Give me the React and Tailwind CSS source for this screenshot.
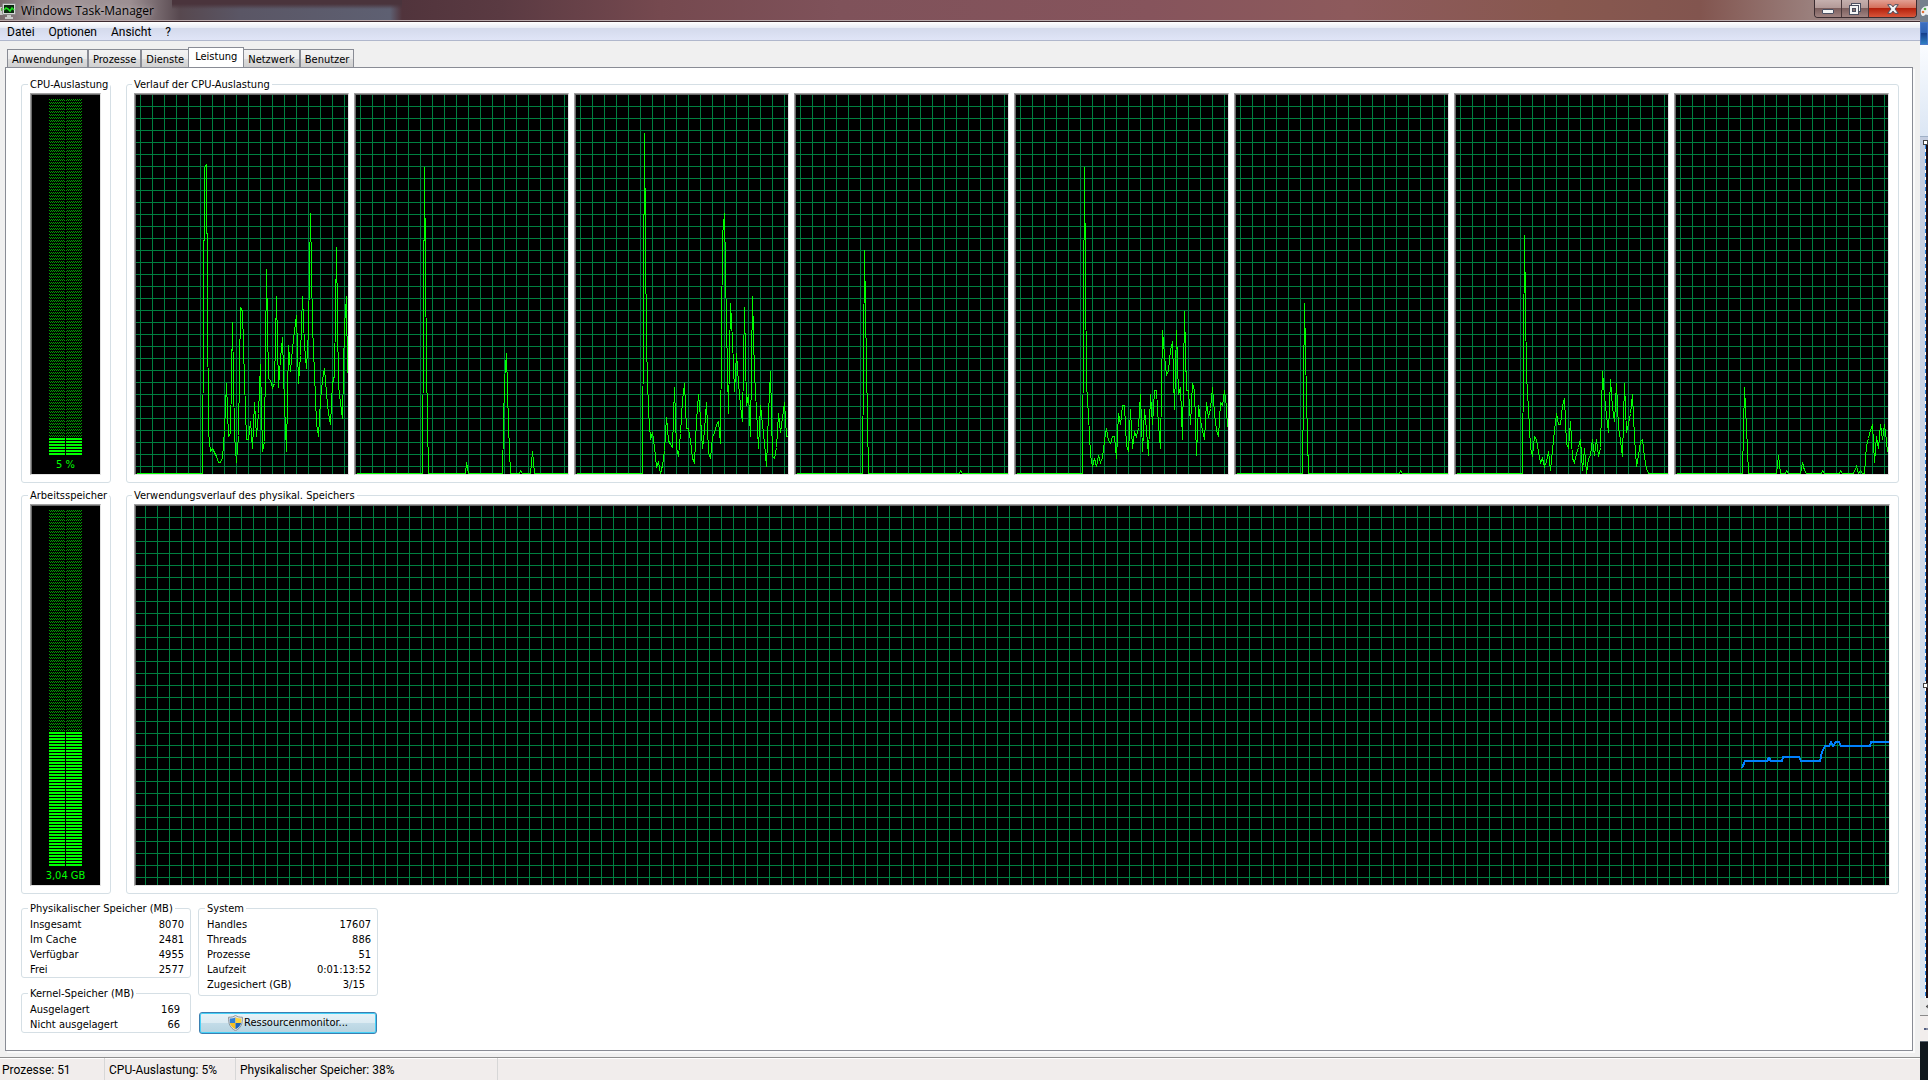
// src/App.jsx
import React, { useState } from 'react';

const menuItems = ['Datei', 'Optionen', 'Ansicht', '?'];
const tabs = ['Anwendungen', 'Prozesse', 'Dienste', 'Leistung', 'Netzwerk', 'Benutzer'];

// One polyline per core, one sample every two pixels
const cpuHistory = [
  '0,378 66,378 68,72 70,69 72,337 74,356 76,353 78,357 80,361 82,367 84,367 86,362 88,335 90,288 92,341 94,338 96,227 98,340 100,367 102,340 104,212 106,216 108,285 110,344 112,344 114,326 116,353 118,307 120,341 122,318 124,269 126,356 128,346 130,174 132,283 134,285 136,292 138,288 140,201 142,292 144,263 146,242 148,310 150,356 152,250 154,276 156,253 158,235 160,220 162,288 164,260 166,201 168,250 170,273 172,235 174,118 176,230 178,278 180,328 182,341 184,305 186,285 188,273 190,298 192,318 194,329 196,288 198,280 200,152 202,290 204,308 206,323 208,230 210,201 211,278',
  '0,378 66,378 68,72 70,270 72,378 109,378 110,367 112,378 146,378 148,285 150,258 152,330 154,378 163,378 164,375 166,378 174,378 176,356 178,378 212,378',
  '0,378 66,378 68,38 70,250 72,315 74,344 76,337 78,352 80,371 82,367 84,378 86,370 88,355 90,322 92,345 94,349 96,352 98,292 100,352 102,361 104,338 106,305 108,288 110,333 112,333 114,345 116,363 118,367 120,325 122,299 124,322 126,353 128,335 130,307 132,357 134,363 136,341 138,338 140,329 142,326 144,348 146,140 148,118 150,230 152,318 154,208 156,245 158,296 160,258 162,288 164,310 166,326 168,212 170,310 172,299 174,341 176,201 178,278 180,315 182,353 184,310 186,329 188,348 190,371 192,318 194,276 196,361 198,363 200,352 202,318 204,337 206,322 208,307 210,341 212,341',
  '0,378 66,378 68,155 70,270 72,378 163,378 164,375 166,378 212,378',
  '0,378 66,378 68,72 70,288 72,320 74,359 76,371 78,363 80,371 82,360 84,367 86,362 88,345 90,333 92,345 94,348 96,341 98,341 100,363 102,318 104,329 106,310 108,310 110,350 112,356 114,314 116,353 118,337 120,341 122,332 124,299 126,356 128,314 130,335 132,360 134,299 136,329 138,295 140,295 142,330 144,353 146,235 148,260 150,280 152,275 154,255 156,246 158,314 160,235 162,299 164,292 166,344 168,216 170,295 172,295 174,329 176,288 178,295 180,360 182,310 184,325 186,335 188,344 190,307 192,322 194,313 196,292 198,318 200,335 202,341 204,307 206,310 208,295 210,312 211,332',
  '0,378 66,378 68,208 70,303 72,378 163,378 164,375 166,378 212,378',
  '0,378 66,378 68,140 70,280 72,314 74,352 76,361 78,341 80,344 82,357 84,367 86,363 88,371 90,366 92,356 94,375 96,355 98,335 100,318 102,329 104,329 106,310 108,303 110,348 112,353 114,326 116,363 118,367 120,358 122,352 124,344 126,375 128,353 130,378 132,363 134,360 136,344 138,360 140,344 142,361 144,352 146,276 148,300 150,320 152,337 154,284 156,312 158,326 160,288 162,332 164,345 166,361 168,288 170,337 172,328 174,318 176,299 178,342 180,371 182,360 184,346 186,344 188,362 190,373 192,378 212,378',
  '0,378 66,378 68,292 70,332 72,378 100,378 102,360 104,378 109,378 110,375 112,378 124,378 126,367 128,375 130,378 145,378 146,375 148,378 163,378 164,375 166,378 177,378 180,371 182,378 184,375 186,378 188,378 190,350 192,343 194,335 196,329 198,367 200,341 202,353 204,329 206,344 208,329 210,345 211,357',
];

const memoryHistory =
  '1606,262 1609,255 1631,255 1633,252 1635,255 1646,255 1647,251 1663,251 1665,255 1684,255 1686,246 1689,240 1693,240 1695,236 1697,240 1700,236 1703,236 1705,240 1734,240 1735,236 1754,236';

const physicalMemory = [
  ['Insgesamt', '8070'],
  ['Im Cache', '2481'],
  ['Verfügbar', '4955'],
  ['Frei', '2577'],
];

const kernelMemory = [
  ['Ausgelagert', '169'],
  ['Nicht ausgelagert', '66'],
];

const systemStats = [
  ['Handles', '17607'],
  ['Threads', '886'],
  ['Prozesse', '51'],
  ['Laufzeit', '0:01:13:52'],
  ['Zugesichert (GB)', '3/15'],
];

const SEGMENTS = 119;

const Group = ({ title, className = '', children }) => (
  <fieldset className={`flex min-w-0 flex-col rounded-[3px] border border-[#d5dfe5] ${className}`}>
    <legend className="-ml-0.5 h-3.5 whitespace-nowrap px-0.5 leading-4">{title}</legend>
    {children}
  </fieldset>
);

const Sunken = ({ className = '', children }) => (
  <div className={`flex min-w-0 flex-col border border-t-[#a0a0a0] border-l-[#a0a0a0] border-r-[#e3e3e3] border-b-[#e3e3e3] ${className}`}>
    <div className="flex min-h-0 flex-1 flex-col border-t border-l border-[#696969] bg-black">
      {children}
    </div>
  </div>
);

const Graph = ({ id, label, points, width, gridX, color = '#00ff00', stroke = 1 }) => (
  <svg className="min-h-0 w-full flex-1" role="img" aria-label={label}>
    <defs>
      <pattern id={id} x={gridX} y="11" width="12" height="12" patternUnits="userSpaceOnUse">
        <rect width="12" height="1" fill="#008040" />
        <rect width="1" height="12" fill="#008040" />
      </pattern>
    </defs>
    <rect width="100%" height="100%" fill={`url(#${id})`} />
    <svg width="100%" height="100%" viewBox={`0 0 ${width} 379`} preserveAspectRatio="none">
      <polyline
        points={points}
        transform={stroke === 1 ? 'translate(0.5 0.5)' : undefined}
        fill="none"
        stroke={color}
        strokeWidth={stroke}
        vectorEffect="non-scaling-stroke"
        shapeRendering="crispEdges"
      />
    </svg>
  </svg>
);

const Meter = ({ id, label, percent, value }) => {
  const lit = Math.round((SEGMENTS * percent) / 100);
  const top = (SEGMENTS - lit) * 3;
  return (
    <Sunken className="flex-1">
      <div className="flex min-h-0 flex-1 flex-col items-center pt-1 pr-px pb-[3px]">
        <svg
          className="min-h-0 w-[33px] flex-1"
          viewBox="0 0 33 357"
          preserveAspectRatio="none"
          shapeRendering="crispEdges"
          role="img"
          aria-label={label}
        >
          <defs>
            <pattern id={id} width="2" height="3" patternUnits="userSpaceOnUse">
              <rect width="1" height="1" fill="#00a000" />
              <rect x="1" y="1" width="1" height="1" fill="#00a000" />
            </pattern>
            <pattern id={`${id}-lit`} width="2" height="3" patternUnits="userSpaceOnUse">
              <rect width="2" height="2" fill="#00ff00" />
            </pattern>
          </defs>
          {[0, 17].map((x) => (
            <g key={x}>
              <rect x={x} width="16" height={top} fill={`url(#${id})`} />
              <rect x={x} y={top} width="16" height={lit * 3} fill={`url(#${id}-lit)`} />
            </g>
          ))}
        </svg>
        <span className="h-[15px] leading-[18px] text-[#00ff00]">{value}</span>
      </div>
    </Sunken>
  );
};

const StatTable = ({ rows, indent = '' }) => (
  <table className="w-full leading-[15px]">
    <tbody>
      {rows.map(([name, value]) => (
        <tr key={name}>
          <th scope="row" className="p-0 text-left font-normal">{name}</th>
          <td className={`p-0 text-right ${value === '3/15' ? 'pr-1.5' : indent}`}>{value}</td>
        </tr>
      ))}
    </tbody>
  </table>
);

const AppIcon = () => (
  <svg className="h-4 w-4" viewBox="0 0 16 16" aria-hidden="true">
    <rect x="0" y="4" width="3" height="8" fill="#c9c9c9" />
    <rect x="1" y="5" width="1" height="3" fill="#5fae3a" />
    <rect x="2.5" y="0.5" width="13" height="11" rx="1" fill="#d6d6d6" stroke="#8b8b8b" />
    <rect x="4" y="2" width="10" height="8" fill="#0b2a10" />
    <path d="M4 7l2-2 2 1 2 2 2-3 2 2" fill="none" stroke="#1fe01f" strokeWidth="1.6" />
    <path d="M7 12h4v2h2v2H5v-2h2z" fill="#c9c9c9" />
  </svg>
);

const ShieldIcon = () => (
  <svg className="h-4 w-[15px]" viewBox="0 0 15 16" aria-hidden="true">
    <path d="M7.5.4C9.5 1.8 11.5 2.3 14.4 2.2 14.7 8.5 13 13 7.5 15.7 2 13 .3 8.5.6 2.2 3.5 2.3 5.5 1.8 7.5.4z" fill="#dfe3e6" stroke="#7b8288" strokeWidth=".8" />
    <path d="M7.5 2.2V8H1.9C1.7 6.6 1.7 5 1.8 3.5 4 3.5 5.8 3.2 7.5 2.2z" fill="#2f7fd6" />
    <path d="M7.5 2.2V8h5.6c.2-1.4.2-3 .1-4.5-2.2 0-4-.3-5.7-1.3z" fill="#fbd23c" />
    <path d="M7.5 8v6.3C4.3 12.7 2.4 10.6 1.9 8z" fill="#f5c021" />
    <path d="M7.5 8v6.3c3.2-1.6 5.1-3.7 5.6-6.3z" fill="#1d63bd" />
  </svg>
);

const TitleBar = () => (
  <header className="flex h-[22px] items-start justify-between border-b border-[#3d2a30] bg-[linear-gradient(#b9a9ab,#b9a9ab),linear-gradient(#4a343c_0,#4a343c_4px,transparent_9px),linear-gradient(90deg,#77696c_0,#a2979a_40px,#9c8f92_130px,#57484f_180px,#5a5665_240px,#5e6072_390px,#51343c_402px,#5a3a42_500px,#75494f_660px,#7f525a_840px,#86545c_1150px,#8d5a5c_1350px,#88584f_1560px,#82554f_1700px,#9a7f7c_1810px,#8a7f83_100%)] bg-[length:100%_1px,230px_20px,100%_100%] bg-[position:0_20px,172px_0,0_0] bg-no-repeat">
    <div className="flex items-center gap-[5px] pt-0.5">
      <AppIcon />
      <h1 className="text-xs leading-[18px] text-black [text-shadow:0_0_6px_#ffffff80]">Windows Task-Manager</h1>
    </div>
    <div className="mr-[3px] flex h-[18px] overflow-hidden rounded-b-[4px] border border-t-0 border-[#3b2c30] text-white">
      <button aria-label="Minimieren" className="flex w-[27px] items-center justify-center border-r border-[#4a383b] bg-[linear-gradient(#c5b0ae_0,#b39a98_45%,#7c5f5e_50%,#a08381_100%)]">
        <svg className="h-2.5 w-3" viewBox="0 0 12 10" aria-hidden="true">
          <rect x=".5" y="5.5" width="11" height="4" rx=".5" fill="#f4f4f4" stroke="#4b4f60" />
        </svg>
      </button>
      <button aria-label="Verkleinern" className="flex w-[27px] items-center justify-center border-r border-[#4a383b] bg-[linear-gradient(#c5b0ae_0,#b39a98_45%,#7c5f5e_50%,#a08381_100%)]">
        <svg className="h-3 w-3" viewBox="0 0 12 12" aria-hidden="true">
          <rect x="2.5" y=".5" width="9" height="8" fill="#f4f4f4" stroke="#4b4f60" />
          <rect x=".5" y="2.5" width="9" height="9" fill="#f4f4f4" stroke="#4b4f60" />
          <rect x="3.5" y="5.5" width="3" height="3" fill="#8d7472" stroke="#4b4f60" />
        </svg>
      </button>
      <button aria-label="Schließen" className="flex w-[47px] items-center justify-center bg-[linear-gradient(#e2a093_0,#d5705b_45%,#b5210c_50%,#d8553a_100%)]">
        <svg className="h-2.5 w-3" viewBox="0 0 12 10" aria-hidden="true">
          <path d="M.7.7h3.5L6 2.9 7.8.7h3.5L8 5l3.3 4.3H7.8L6 7.1 4.2 9.3H.7L4 5z" fill="#f4f4f4" stroke="#4b4f60" />
        </svg>
      </button>
    </div>
  </header>
);

// Sliver of the paint program behind the maximised window
const BackgroundWindow = () => (
  <aside className="flex w-2 shrink-0 flex-col overflow-hidden bg-[#d3deed]" aria-hidden="true">
    <div className="h-[22px] shrink-0 bg-[#74808d]">
      <svg className="h-full w-2" viewBox="0 0 8 22">
        <path d="M8 6C3 6 0 9 1 14c1 3 3 2 4 1s2 0 3 0z" fill="#eef1f4" />
        <circle cx="5" cy="9" r="1.3" fill="#4fae4a" />
        <circle cx="3" cy="12" r="1.3" fill="#e0703a" />
      </svg>
    </div>
    <div className="h-[23px] shrink-0 border border-[#4a78c8] bg-[linear-gradient(#3c6fc0_0,#2f62b4_45%,#163f8c_50%,#2f7fc4_100%)]" />
    <div className="h-[92px] shrink-0 border-b border-[#9fb0c6] bg-[linear-gradient(#fafcff,#dbe6f4)]" />
    <div className="flex min-h-0 flex-1 bg-[linear-gradient(#c3cde0,#dbe6f2)] pl-[3px]">
      <svg className="h-full w-[5px]" shapeRendering="crispEdges">
        <rect x="3" y="8" width="2" height="100%" fill="#1c0d12" />
        <rect x="2" y="8" width="1" height="100%" fill="#ffffff" />
        <line x1="2.5" x2="2.5" y1="8" y2="100%" stroke="#2f86e0" strokeWidth="1" strokeDasharray="4 3" />
        <rect x="0.5" y="3.5" width="4" height="4" fill="#ffffff" stroke="#444444" />
        <rect x="0.5" y="63.5%" width="4" height="4" fill="#ffffff" stroke="#444444" />
      </svg>
    </div>
    <div className="h-[18px] shrink-0 border-b border-[#8a8a8a] bg-[#e9e9e9]">
      <svg className="h-full w-2" viewBox="0 0 8 18">
        <path d="M6 9l2-2v4z" fill="#333333" />
      </svg>
    </div>
    <div className="h-[25px] shrink-0 bg-[#f1edec]">
      <svg className="h-full w-2" viewBox="0 0 8 25">
        <path d="M4 13h4M5 12v2" stroke="#1f2f5c" />
      </svg>
    </div>
    <div className="h-[39px] shrink-0 border-t border-[#5b6670] bg-[#10181e]" />
  </aside>
);

const App = () => {
  const [activeTab, setActiveTab] = useState('Leistung');

  return (
    <div className="flex h-screen bg-white pb-3 font-['Open_Sans','Noto_Sans',sans-serif] text-black">
      <div className="flex min-w-0 flex-1 flex-col bg-[#f0f0f0]">
        <TitleBar />

        <nav className="flex h-[19px] items-center gap-3.5 border-b border-[#b0b7cc] bg-[linear-gradient(#ffffff_0,#e6eaf4_35%,#d4daec_36%,#e0e5f7_100%)] pt-0.5 pl-[7px] font-['Roboto',sans-serif] text-xs leading-4">
          {menuItems.map((item) => (
            <button key={item}>{item}</button>
          ))}
        </nav>

        <main className="flex min-h-0 flex-1 flex-col pt-1.5 pr-[7px] pb-1.5 pl-[5px] font-['DejaVu_Sans_Condensed','DejaVu_Sans',sans-serif] text-[11px]">
          <div role="tablist" className="flex items-end pl-0.5">
            {tabs.map((tab) => (
              <button
                key={tab}
                role="tab"
                aria-selected={tab === activeTab}
                onClick={() => setActiveTab(tab)}
                className={
                  tab === activeTab
                    ? '-mx-px -mb-px h-[21px] border border-b-0 border-[#898c95] bg-white px-1.5 pb-0.5 leading-4'
                    : 'h-[18px] border border-b-0 border-[#898c95] bg-[linear-gradient(#f3f3f3_0,#ececec_50%,#dedede_51%,#d0d0d0_100%)] px-1 pt-0.5 leading-4'
                }
              >
                {tab}
              </button>
            ))}
          </div>

          <div className="flex min-h-0 flex-1 flex-col gap-[5px] border border-[#898c95] bg-white pt-[9px] pr-[13px] pb-4 pl-[15px] shadow-[2px_2px_0_#fafafa]">
            <div className="flex min-h-0 flex-1 gap-[15px]">
              <Group title="CPU-Auslastung" className="w-[90px] pt-0.5 pr-[9px] pb-[7px] pl-2">
                <Meter id="cpu-meter" label="CPU-Auslastung 5 %" percent={5} value="5 %" />
              </Group>
              <Group title="Verlauf der CPU-Auslastung" className="flex-1 pt-0.5 pr-[9px] pb-[7px] pl-[7px]">
                <div className="flex min-h-0 flex-1 gap-[5px]">
                  {cpuHistory.map((points, index) => (
                    <Sunken key={index} className="flex-1">
                      <Graph id={`cpu-grid-${index}`} label={`CPU ${index}`} points={points} width={212} gridX={4} />
                    </Sunken>
                  ))}
                </div>
              </Group>
            </div>

            <div className="flex min-h-0 flex-1 gap-[15px]">
              <Group title="Arbeitsspeicher" className="w-[90px] pt-0.5 pr-[9px] pb-[7px] pl-2">
                <Meter id="memory-meter" label="Arbeitsspeicher 3,04 GB" percent={38} value="3,04 GB" />
              </Group>
              <Group title="Verwendungsverlauf des physikal. Speichers" className="flex-1 pt-0.5 pr-2 pb-[7px] pl-[7px]">
                <Sunken className="flex-1">
                  <Graph
                    id="memory-grid"
                    label="Verwendungsverlauf"
                    points={memoryHistory}
                    width={1753}
                    gridX={9}
                    color="#0080ff"
                    stroke={2}
                  />
                </Sunken>
              </Group>
            </div>

            <div className="flex items-start gap-[7px] pt-0.5">
              <div className="flex w-[170px] flex-col gap-2">
                <Group title="Physikalischer Speicher (MB)" className="pt-0.5 pr-1.5 pl-2">
                  <StatTable rows={physicalMemory} />
                </Group>
                <Group title="Kernel-Speicher (MB)" className="pt-0.5 pr-1.5 pl-2">
                  <StatTable rows={kernelMemory} indent="pr-1" />
                </Group>
              </div>
              <div className="flex w-[180px] flex-col gap-4">
                <Group title="System" className="pt-0.5 pr-1.5 pb-[3px] pl-2">
                  <StatTable rows={systemStats} />
                </Group>
                <button className="mx-px flex h-[22px] items-center justify-center gap-px rounded-[3px] border border-[#3c7fb1] bg-[linear-gradient(#e8f3f8_0,#dcebf2_48%,#c3dce8_52%,#b6d3e0_100%)] shadow-[inset_0_0_0_1px_#46d1f7]">
                  <ShieldIcon />
                  Ressourcenmonitor...
                </button>
              </div>
            </div>
          </div>
        </main>

        <footer className="flex h-[23px] shrink-0 items-stretch border-t border-[#8f8f8f] bg-[#f1edec] font-['Roboto',sans-serif] text-xs leading-6 shadow-[inset_0_1px_0_#ffffff]">
          <div className="w-[105px] border-r border-[#d7d7d7] pl-0.5">Prozesse: 51</div>
          <div className="w-[131px] border-r border-[#d7d7d7] pl-1">CPU-Auslastung: 5%</div>
          <div className="w-[262px] border-r border-[#d7d7d7] pl-1">Physikalischer Speicher: 38%</div>
        </footer>
      </div>
      <BackgroundWindow />
    </div>
  );
};

export default App;
